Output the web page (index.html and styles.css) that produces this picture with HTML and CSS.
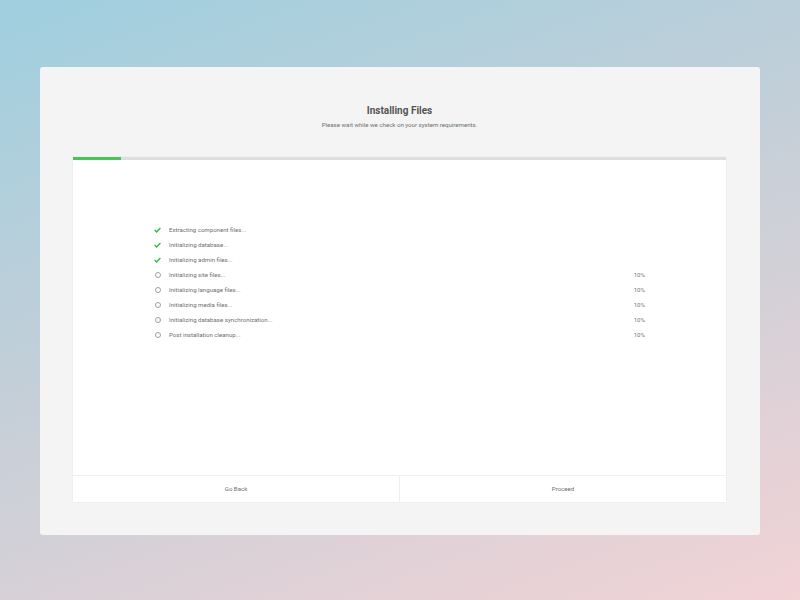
FILE: index.html
```html
<!DOCTYPE html>
<html>
<head>
<meta charset="utf-8">
<link rel="stylesheet" href="styles.css">
</head>
<body>
<div class="card">
  <header class="head">
    <h1 class="title">Installing Files</h1>
    <p class="subtitle">Please wait while we check on your system requirements.</p>
  </header>
  <section class="panel">
    <div class="track"><div class="fill" style="width:7.4%"></div></div>
    <div class="body">
      <ul class="steps">
        <li class="step done"><span class="ico"><svg width="7" height="6" viewBox="0 0 7 6"><path d="M0.6 3 L2.6 4.9 L6.4 0.9" fill="none" stroke="#3cb54a" stroke-width="1.4"/></svg></span><span class="label">Extracting component files...</span><span class="pct"></span></li>
        <li class="step done"><span class="ico"><svg width="7" height="6" viewBox="0 0 7 6"><path d="M0.6 3 L2.6 4.9 L6.4 0.9" fill="none" stroke="#3cb54a" stroke-width="1.4"/></svg></span><span class="label">Initializing database...</span><span class="pct"></span></li>
        <li class="step done"><span class="ico"><svg width="7" height="6" viewBox="0 0 7 6"><path d="M0.6 3 L2.6 4.9 L6.4 0.9" fill="none" stroke="#3cb54a" stroke-width="1.4"/></svg></span><span class="label">Initializing admin files...</span><span class="pct"></span></li>
        <li class="step"><span class="ico"><span class="ring"></span></span><span class="label">Initializing site files...</span><span class="pct">10%</span></li>
        <li class="step"><span class="ico"><span class="ring"></span></span><span class="label">Initializing language files...</span><span class="pct">10%</span></li>
        <li class="step"><span class="ico"><span class="ring"></span></span><span class="label">Initializing media files...</span><span class="pct">10%</span></li>
        <li class="step"><span class="ico"><span class="ring"></span></span><span class="label">Initializing database synchronization...</span><span class="pct">10%</span></li>
        <li class="step"><span class="ico"><span class="ring"></span></span><span class="label">Post installation cleanup...</span><span class="pct">10%</span></li>
      </ul>
    </div>
    <footer class="actions">
      <button class="btn">Go Back</button>
      <button class="btn">Proceed</button>
    </footer>
  </section>
</div>
</body>
</html>
```

FILE: styles.css
```css
* { box-sizing: border-box; }
html, body { margin: 0; height: 600px; }
body {
  background: linear-gradient(160deg, #9fcfdf 0%, #c4cfd8 45%, #f2d3d6 100%);
  font-family: Roboto, "Liberation Sans", sans-serif;
  padding: 67px 40px 65px;
}
.card {
  background: #f4f4f4;
  border-radius: 3px;
  height: 468px;
  padding: 37px 34px 33px 33px;
  display: flex;
  flex-direction: column;
}
.head { text-align: center; height: 53px; }
.title {
  margin: 0;
  font-size: 10px;
  line-height: 13px;
  font-weight: 700;
  color: #555;
}
.subtitle {
  margin: 3px 0 0;
  font-size: 6.1px;
  line-height: 9px;
  color: #707070;
}
.panel {
  flex: 1;
  background: #fff;
  display: flex;
  flex-direction: column;
  box-shadow: 0 0 1px rgba(0,0,0,0.12);
}
.track { height: 3px; background: #dedede; }
.fill { height: 3px; background: #4cc25a; }
.body { flex: 1; padding: 62px 81px 0 81px; }
.steps { list-style: none; margin: 0; padding: 0; }
.step {
  display: flex;
  align-items: center;
  height: 15px;
  font-size: 6.1px;
  color: #707070;
}
.ico { width: 7px; display: flex; justify-content: center; align-items: center; margin-right: 8px; }
.label { flex: 1; }
.pct { color: #777; }
.ring {
  width: 6px; height: 6px;
  border: 1px solid #a0a0a0;
  border-radius: 50%;
}
.actions {
  display: flex;
  border-top: 1px solid #f0f0f0;
  height: 27px;
}
.btn {
  flex: 1;
  background: #fff;
  border: none;
  font-family: inherit;
  font-size: 6.1px;
  color: #707070;
  padding: 0 0 2px;
}
.btn + .btn { border-left: 1px solid #eee; }
```
